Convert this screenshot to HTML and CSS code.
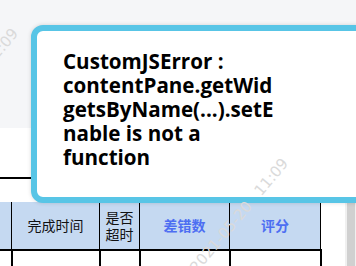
FILE: index.html
```html
<!DOCTYPE html>
<html lang="zh">
<head>
    <meta charset="UTF-8">
    <meta name="viewport" content="width=device-width, initial-scale=1.0">
    <title>任务列表</title>
    <link rel="stylesheet" href="styles.css">
</head>
<body>
    <div class="cabecera"></div>
    <div class="cuerpo">
        <div class="principal">
            <div class="linea"></div>
            <table class="tabla">
                <tr class="fila-titulo">
                    <th class="col-a"></th>
                    <th class="col-b">完成时间</th>
                    <th class="col-c">是否<br>超时</th>
                    <th class="col-d azul">差错数</th>
                    <th class="col-e azul">评分</th>
                </tr>
                <tr class="fila">
                    <td></td><td></td><td></td><td></td><td></td>
                </tr>
            </table>
        </div>
        <div class="barra"><div class="pulgar"></div></div>
    </div>

    <div class="alerta">
        <p class="mensaje">CustomJSError : contentPane.getWidgetsByName(...).setEnable is not a function</p>
    </div>

    <span class="marca marca-1">2021-05-20 11:09</span>
    <span class="marca marca-2">2021-05-20 11:09</span>
</body>
</html>
```

FILE: styles.css
```css
body {
    margin: 0;
    width: 356px;
    height: 266px;
    overflow: hidden;
    position: relative;
    background: #fff;
    font-family: "Noto Sans CJK SC", "Noto Sans", sans-serif;
}
.cabecera {
    height: 128px;
    background: #f5f6f8;
}
.cuerpo {
    display: flex;
    height: 138px;
}
.principal {
    flex: 1;
}
.linea {
    margin-top: 49px;
    width: 200px;
    border-top: 2px solid #000;
}
.tabla {
    margin-top: 23px;
    border-collapse: collapse;
    table-layout: fixed;
}
.tabla th {
    height: 47px;
    padding: 0;
    background: #c5d9f1;
    border-right: 1px solid #000;
    border-bottom: 2px solid #000;
    font-size: 14px;
    font-weight: normal;
    line-height: 17px;
    color: #111;
}
.tabla td {
    height: 20px;
    border-right: 2px solid #000;
}
.col-a { width: 11px; }
.col-b { width: 87px; }
.col-c { width: 39px; }
.col-d { width: 89px; }
.col-e { width: 90px; }
.tabla th.azul {
    color: #4d6ef2;
    font-weight: bold;
}
.barra {
    width: 11px;
    background: #f0f0f0;
    display: flex;
    justify-content: center;
}
.pulgar {
    width: 8px;
    margin-left: 1px;
    height: 100%;
    background: #d0d0d0;
}
.alerta {
    position: absolute;
    left: 31px;
    top: 25px;
    width: 340px;
    height: 178px;
    box-sizing: border-box;
    border: 6px solid #58c5e6;
    border-radius: 12px;
    background: #fff;
    box-shadow: 0 0 4px rgba(0, 0, 0, 0.15);
    padding: 18px 0 0 26px;
}
.mensaje {
    margin: 0;
    width: 214px;
    font-family: "Open Sans", sans-serif;
    font-weight: bold;
    font-size: 20.6px;
    line-height: 24px;
    color: #000;
    overflow-wrap: anywhere;
}
.marca {
    position: absolute;
    color: #dadada;
    font-family: "DejaVu Sans", sans-serif;
    font-size: 15px;
    word-spacing: 8px;
    white-space: nowrap;
    pointer-events: none;
    transform: rotate(-50deg);
    transform-origin: left bottom;
}
.marca-1 {
    left: -70px;
    top: 128px;
}
.marca-2 {
    left: 200px;
    top: 258px;
}
```
